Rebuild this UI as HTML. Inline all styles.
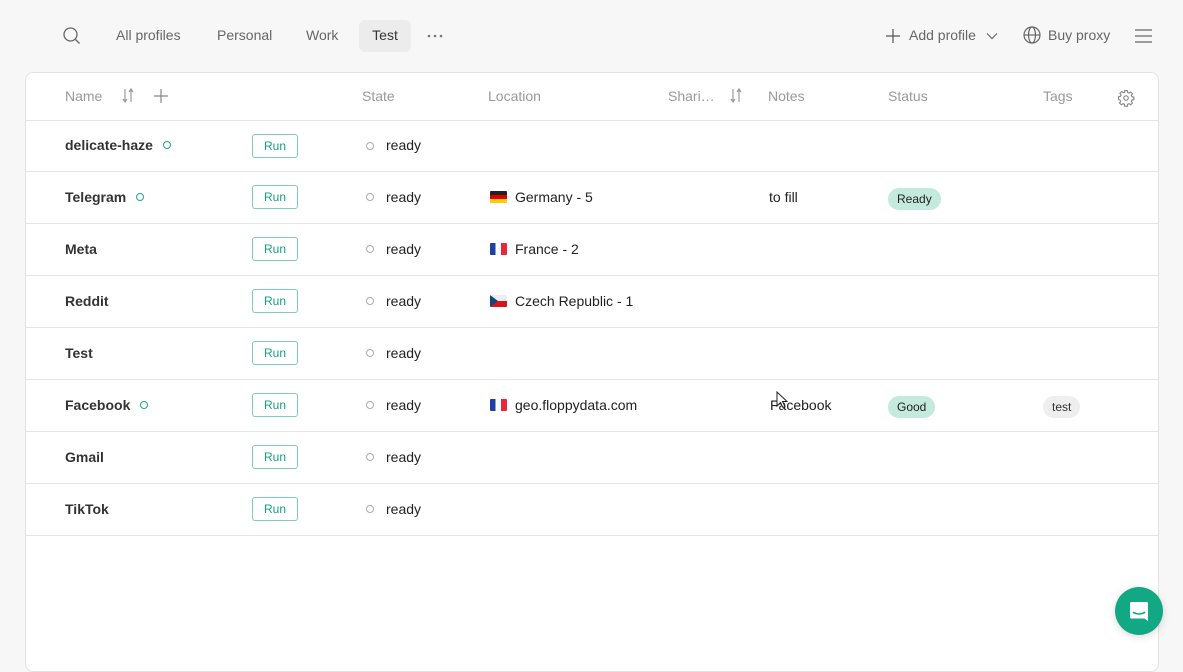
<!DOCTYPE html>
<html><head><style>
*{box-sizing:border-box;margin:0;padding:0}
body{width:1183px;height:655px;background:#f7f7f7;font-family:"Liberation Sans",sans-serif;font-size:14px;color:#222;position:relative;overflow:hidden}
.a{position:absolute;white-space:nowrap}
.top{color:#666}
.card{position:absolute;left:25px;top:72px;width:1134px;height:600px;background:#fff;border:1px solid #e3e3e3;border-radius:8px}
.hdr{color:#999}
.row{position:absolute;left:0;width:1132px;height:52px;border-bottom:1px solid #e6e6e6}
.run{position:absolute;left:226px;top:13px;width:46px;height:24px;border:1px solid #7fcdb8;border-radius:3px;color:#16a07e;font-size:12px;text-align:center;line-height:22px}
.dot{display:inline-block;width:8px;height:8px;border:1.5px solid #1aa884;border-radius:50%;margin-left:10px;vertical-align:1px}
.gd{position:absolute;left:340px;top:21px;width:8px;height:8px;border:1px solid #aaa;border-radius:50%}
.flag{display:inline-block;width:17px;height:12px;vertical-align:-1px;margin-right:8px;border-radius:1px}
.pill{position:absolute;height:22px;border-radius:11px;font-size:12px;line-height:22px;padding:0 9px}
.nm{font-weight:bold;color:#333}
</style></head><body>
<svg class="a" style="left:62px;top:26px" width="20" height="20" viewBox="0 0 20 20" fill="none" stroke="#666" stroke-width="1.3"><circle cx="8.5" cy="8.5" r="6.5"/><path d="M13.5 13.5l4 4"/></svg>
<div class="a top" style="left:116px;top:27px">All profiles</div>
<div class="a top" style="left:217px;top:27px">Personal</div>
<div class="a top" style="left:306px;top:27px">Work</div>
<div class="a" style="left:359px;top:20px;width:52px;height:32px;background:#ececec;border-radius:6px;text-align:center;line-height:30px;color:#333">Test</div>
<svg class="a" style="left:427px;top:34px" width="16" height="4" fill="#777"><circle cx="2" cy="2" r="1.3"/><circle cx="8" cy="2" r="1.3"/><circle cx="14" cy="2" r="1.3"/></svg>
<svg class="a" style="left:885px;top:28px" width="16" height="16" stroke="#555" stroke-width="1.2"><path d="M8 1v14M1 8h14"/></svg>
<div class="a top" style="left:909px;top:27px">Add profile</div>
<svg class="a" style="left:986px;top:32px" width="12" height="8" fill="none" stroke="#666" stroke-width="1.2"><path d="M1 1.5l5 5 5-5"/></svg>
<svg class="a" style="left:1023px;top:26px" width="18" height="18" viewBox="0 0 18 18" fill="none" stroke="#666" stroke-width="1.2"><circle cx="9" cy="9" r="8"/><ellipse cx="9" cy="9" rx="3.5" ry="8"/><path d="M1 9h16"/></svg>
<div class="a top" style="left:1048px;top:27px">Buy proxy</div>
<svg class="a" style="left:1135px;top:28px" width="17" height="16" stroke="#666" stroke-width="1.2"><path d="M0 2h17M0 8h17M0 14h17"/></svg>
<div class="card">
 <div class="row" style="top:0;height:48px">
  <div class="a hdr" style="left:39px;top:15px">Name</div>
  <svg class="a" style="left:96px;top:15px" width="12" height="16" stroke="#999" stroke-width="1.2" fill="none"><path d="M3 1v13M1 11l2 3 2-3M9 14V1M7 4l2-3 2 3"/></svg>
  <svg class="a" style="left:127px;top:15px" width="16" height="16" stroke="#888" stroke-width="1.2"><path d="M8 1v14M1 8h14"/></svg>
  <div class="a hdr" style="left:336px;top:15px">State</div>
  <div class="a hdr" style="left:462px;top:15px">Location</div>
  <div class="a hdr" style="left:642px;top:15px">Shari…</div>
  <svg class="a" style="left:704px;top:15px" width="12" height="16" stroke="#999" stroke-width="1.2" fill="none"><path d="M3 1v13M1 11l2 3 2-3M9 14V1M7 4l2-3 2 3"/></svg>
  <div class="a hdr" style="left:742px;top:15px">Notes</div>
  <div class="a hdr" style="left:862px;top:15px">Status</div>
  <div class="a hdr" style="left:1017px;top:15px">Tags</div>
  <svg class="a" style="left:1091px;top:16px" width="18" height="18" viewBox="0 0 24 24" fill="none" stroke="#888" stroke-width="1.5"><circle cx="12" cy="12" r="3"/><path d="M10.3 2h3.4l.5 2.6 1.8.8 2.2-1.5 2.4 2.4-1.5 2.2.8 1.8 2.6.5v3.4l-2.6.5-.8 1.8 1.5 2.2-2.4 2.4-2.2-1.5-1.8.8-.5 2.6h-3.4l-.5-2.6-1.8-.8-2.2 1.5-2.4-2.4 1.5-2.2-.8-1.8L2 13.7v-3.4l2.6-.5.8-1.8-1.5-2.2 2.4-2.4 2.2 1.5 1.8-.8z"/></svg>
 </div>
 <div class="row" style="top:48px;height:51px"><div class="a nm" style="left:39px;top:16px">delicate-haze<span class="dot"></span></div><div class="run">Run</div><div class="gd"></div><div class="a" style="left:360px;top:16px">ready</div></div>
 <div class="row" style="top:99px"><div class="a nm" style="left:39px;top:17px">Telegram<span class="dot"></span></div><div class="run">Run</div><div class="gd"></div><div class="a" style="left:360px;top:17px">ready</div>
  <div class="a" style="left:464px;top:17px"><span class="flag" style="background:linear-gradient(#222 33%,#d00 33% 66%,#fc0 66%)"></span>Germany - 5</div>
  <div class="a" style="left:743px;top:17px">to fill</div>
  <div class="pill" style="left:862px;top:16px;background:#c3eadd">Ready</div></div>
 <div class="row" style="top:151px"><div class="a nm" style="left:39px;top:17px">Meta</div><div class="run">Run</div><div class="gd"></div><div class="a" style="left:360px;top:17px">ready</div>
  <div class="a" style="left:464px;top:17px"><span class="flag" style="background:linear-gradient(90deg,#1f3fa8 33%,#fff 33% 66%,#e8283a 66%)"></span>France - 2</div></div>
 <div class="row" style="top:203px"><div class="a nm" style="left:39px;top:17px">Reddit</div><div class="run">Run</div><div class="gd"></div><div class="a" style="left:360px;top:17px">ready</div>
  <div class="a" style="left:464px;top:17px"><span class="flag" style="background:linear-gradient(#eee 50%,#d7141a 50%);position:relative;overflow:hidden"><svg width="17" height="12" style="position:absolute;left:0;top:0"><path d="M0 0L8 6 0 12z" fill="#11457e"/></svg></span>Czech Republic - 1</div></div>
 <div class="row" style="top:255px"><div class="a nm" style="left:39px;top:17px">Test</div><div class="run">Run</div><div class="gd"></div><div class="a" style="left:360px;top:17px">ready</div></div>
 <div class="row" style="top:307px"><div class="a nm" style="left:39px;top:17px">Facebook<span class="dot"></span></div><div class="run">Run</div><div class="gd"></div><div class="a" style="left:360px;top:17px">ready</div>
  <div class="a" style="left:464px;top:17px"><span class="flag" style="background:linear-gradient(90deg,#1f3fa8 33%,#fff 33% 66%,#e8283a 66%)"></span>geo.floppydata.com</div>
  <div class="a" style="left:744px;top:17px">Facebook</div>
  <div class="pill" style="left:862px;top:16px;background:#c3eadd">Good</div>
  <div class="pill" style="left:1017px;top:16px;background:#eeeeef;color:#333">test</div></div>
 <div class="row" style="top:359px"><div class="a nm" style="left:39px;top:17px">Gmail</div><div class="run">Run</div><div class="gd"></div><div class="a" style="left:360px;top:17px">ready</div></div>
 <div class="row" style="top:411px"><div class="a nm" style="left:39px;top:17px">TikTok</div><div class="run">Run</div><div class="gd"></div><div class="a" style="left:360px;top:17px">ready</div></div>
</div>
<svg class="a" style="left:776px;top:391px" width="12" height="18" viewBox="0 0 12 18"><path d="M1 1v14l3.5-3.5 2.5 5 2-1-2.5-5H11z" fill="#fff" stroke="#222" stroke-width="1"/></svg>
<div class="a" style="left:1115px;top:587px;width:48px;height:48px;border-radius:50%;background:#12a884;box-shadow:0 2px 8px rgba(0,0,0,.15)">
 <svg width="48" height="48" viewBox="0 0 48 48"><path d="M15 16.5a1.5 1.5 0 0 1 1.5-1.5h15a1.5 1.5 0 0 1 1.5 1.5V34l-3.5-2.5h-13a1.5 1.5 0 0 1-1.5-1.5z" fill="#fff"/><path d="M18.5 25.5q5.5 3 11 0" stroke="#12a884" stroke-width="1.6" fill="none" stroke-linecap="round"/></svg>
</div>
</body></html>
